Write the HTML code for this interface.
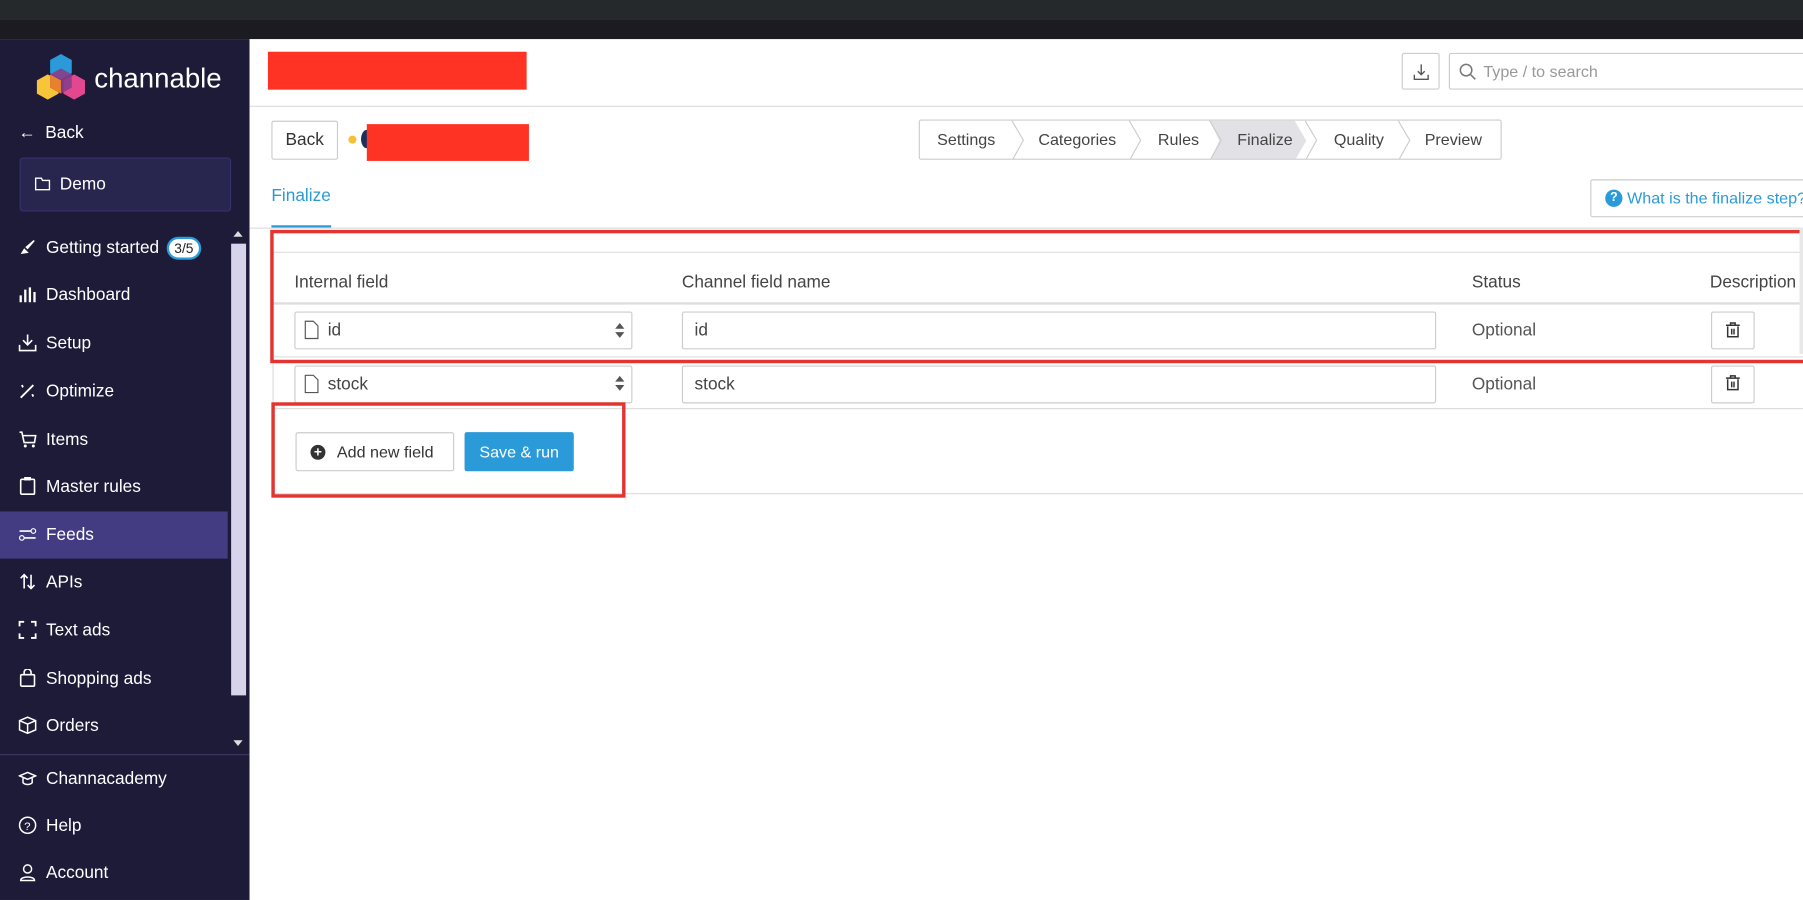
<!DOCTYPE html>
<html><head><meta charset="utf-8"><style>
*{box-sizing:border-box;margin:0;padding:0}
html,body{width:1803px;height:900px;overflow:hidden;background:#fff}
#w{position:absolute;left:0;top:0;width:1568px;height:783px;transform:scale(1.14987,1.1494);transform-origin:0 0;font-family:"Liberation Sans",sans-serif;color:#444}
.a{position:absolute}
.nav{position:absolute;left:0;width:198px;height:41px;color:#fff;font-size:15px;line-height:41px;padding-left:40px}
.nav svg{position:absolute;left:16px;top:12px}
.box{position:absolute;border:1px solid #ccc;border-radius:2px;background:#fff}
.hl{position:absolute;height:1px;background:#ddd}
.th{position:absolute;font-size:15px;color:#444;top:237px}
</style></head><body><div id="w">
<div class="a" style="left:0;top:0;width:1568px;height:17px;background:#25292c"></div>
<div class="a" style="left:0;top:17px;width:1568px;height:17px;background:#1c1b21"></div>
<!-- sidebar -->
<div class="a" style="left:0;top:34px;width:217px;height:749px;background:#1e1b39"></div>
<svg class="a" style="left:30px;top:46px" width="46" height="50" viewBox="0 0 44 46">
<polygon points="22,0 31,5 31,16 22,21 13,16 13,5" fill="#2a9ad8"/>
<polygon points="11,17 20,22 20,33 11,38 2,33 2,22" fill="#f7c53a"/>
<polygon points="33,17 42,22 42,33 33,38 24,33 24,22" fill="#e2478f"/>
<polygon points="22,12 31,17 31,28 22,33 13,28 13,17" fill="#8a3d8a" opacity=".9"/>
<polygon points="13,17 22,22 22,33 13,28" fill="#e8802d"/>
</svg>
<div class="a" style="left:82px;top:55px;color:#fff;font-size:24px">channable</div>
<div class="a" style="left:16px;top:107px;color:#fff;font-size:15px">&#8592;&nbsp; Back</div>
<div class="a" style="left:17px;top:137px;width:184px;height:47px;background:#28254f;border:1px solid #35316a;border-radius:3px;color:#fff;font-size:15px;line-height:45px;padding-left:34px">Demo
<svg class="a" style="left:12px;top:16px" width="14" height="12"><path d="M1 1h5l1 2h6v8H1z" fill="none" stroke="#fff" stroke-width="1.2"/></svg></div>
<div class="nav" style="top:195px">Getting started <span style="display:inline-block;background:#fff;color:#222;border:2px solid #2a9ad8;border-radius:10px;font-size:12px;line-height:16px;padding:0 5px;margin-left:2px">3/5</span><svg width="16" height="16"><path d="M2 14l3-5 4 4zM6 8l7-6c1 0 1 0 1 1l-6 7z" fill="#fff"/></svg></div>
<div class="nav" style="top:236px">Dashboard<svg width="16" height="16"><path d="M2 9v6M6 4v11M10 2v13M14 6v9" stroke="#fff" stroke-width="2"/></svg></div>
<div class="nav" style="top:278px">Setup<svg width="16" height="16"><path d="M8 1v9M4 6l4 4 4-4M1 10v5h14v-5" fill="none" stroke="#fff" stroke-width="1.4"/></svg></div>
<div class="nav" style="top:320px">Optimize<svg width="16" height="16"><path d="M2 14L13 3M3 3l1 2M12 11l1 2" stroke="#fff" stroke-width="1.6"/></svg></div>
<div class="nav" style="top:362px">Items<svg width="16" height="16"><path d="M1 2h2l2 9h9l1-6H4" fill="none" stroke="#fff" stroke-width="1.4"/><circle cx="6" cy="14" r="1.3" fill="#fff"/><circle cx="13" cy="14" r="1.3" fill="#fff"/></svg></div>
<div class="nav" style="top:403px">Master rules<svg width="16" height="16"><rect x="2" y="2" width="12" height="13" rx="1" fill="none" stroke="#fff" stroke-width="1.4"/><rect x="5" y="0" width="6" height="3" fill="#fff"/></svg></div>
<div class="nav" style="top:445px;background:#443c82">Feeds<svg width="16" height="16"><path d="M1 5h10M5 11h10" stroke="#fff" stroke-width="1.4"/><circle cx="13" cy="5" r="2" fill="none" stroke="#fff"/><circle cx="3" cy="11" r="2" fill="none" stroke="#fff"/></svg></div>
<div class="nav" style="top:486px">APIs<svg width="16" height="16"><path d="M5 2v12M2 5l3-3 3 3M11 2v12M8 11l3 3 3-3" fill="none" stroke="#fff" stroke-width="1.4"/></svg></div>
<div class="nav" style="top:528px">Text ads<svg width="16" height="16"><path d="M1 5V1h4M11 1h4v4M15 11v4h-4M5 15H1v-4" fill="none" stroke="#fff" stroke-width="1.6"/></svg></div>
<div class="nav" style="top:570px">Shopping ads<svg width="16" height="16"><rect x="2" y="5" width="12" height="10" rx="1" fill="none" stroke="#fff" stroke-width="1.4"/><path d="M5 5V3a3 3 0 016 0v2" fill="none" stroke="#fff" stroke-width="1.4"/></svg></div>
<div class="nav" style="top:611px">Orders<svg width="16" height="16"><path d="M8 1l7 3v8l-7 3-7-3V4zM1 4l7 3 7-3M8 7v8" fill="none" stroke="#fff" stroke-width="1.3"/></svg></div>
<div class="a" style="left:200px;top:198px;width:15px;height:460px;background:#1e1b39"></div>
<div class="a" style="left:201px;top:212px;width:13px;height:393px;background:#d6d3ea"></div>
<div class="a" style="left:203px;top:201px;width:0;height:0;border:4px solid transparent;border-bottom:5px solid #ddd;border-top:0"></div>
<div class="a" style="left:203px;top:644px;width:0;height:0;border:4px solid transparent;border-top:5px solid #ddd;border-bottom:0"></div>
<div class="a" style="left:0;top:656px;width:217px;height:1px;background:#3a3760"></div>
<div class="nav" style="top:657px">Channacademy<svg width="16" height="16"><path d="M1 6l7-3 7 3-7 3zM4 8v4c2 2 6 2 8 0V8" fill="none" stroke="#fff" stroke-width="1.3"/></svg></div>
<div class="nav" style="top:698px">Help<svg width="16" height="16"><circle cx="8" cy="8" r="7" fill="none" stroke="#fff" stroke-width="1.3"/><text x="5" y="12" fill="#fff" font-size="10" font-family="Liberation Sans">?</text></svg></div>
<div class="nav" style="top:739px">Account<svg width="16" height="16"><circle cx="8" cy="5" r="3.5" fill="none" stroke="#fff" stroke-width="1.3"/><path d="M2 15c0-4 12-4 12 0z" fill="none" stroke="#fff" stroke-width="1.3"/></svg></div>
<!-- main header -->
<div class="a" style="left:233px;top:45px;width:225px;height:33px;background:#ff3323"></div>
<div class="box" style="left:1219px;top:46px;width:33px;height:32px"><svg class="a" style="left:8px;top:8px" width="16" height="16"><path d="M8 1v9M5 7l3 3 3-3M2 10v4h12v-4" fill="none" stroke="#555" stroke-width="1.2"/></svg></div>
<div class="box" style="left:1260px;top:46px;width:320px;height:32px;font-size:14px;color:#999;line-height:30px;padding-left:29px">Type / to search<svg class="a" style="left:8px;top:8px" width="15" height="15"><circle cx="6" cy="6" r="5" fill="none" stroke="#777" stroke-width="1.3"/><path d="M10 10l4 4" stroke="#777" stroke-width="1.3"/></svg></div>
<div class="hl" style="left:217px;top:92px;width:1351px;background:#ddd"></div>
<div class="box" style="left:236px;top:105px;width:58px;height:34px;font-size:15px;line-height:32px;text-align:center;color:#333">Back</div>
<div class="a" style="left:303px;top:118px;width:7px;height:7px;border-radius:50%;background:#f5c033"></div>
<div class="a" style="left:314px;top:113px;width:10px;height:16px;border-radius:50%;background:#1a3060"></div>
<div class="a" style="left:319px;top:108px;width:141px;height:32px;background:#ff3323"></div>
<!-- stepper -->
<div class="box" style="left:799px;top:104px;width:507px;height:35px;overflow:hidden;font-size:14px;color:#444;line-height:33px">
<div class="a" style="left:252px;top:0;width:84px;height:35px;background:#e2e2e6;clip-path:polygon(0 0,88% 0,100% 50%,88% 100%,0 100%,10% 50%)"></div>
<span class="a" style="left:15px">Settings</span><span class="a" style="left:103px">Categories</span><span class="a" style="left:207px">Rules</span><span class="a" style="left:276px">Finalize</span><span class="a" style="left:360px">Quality</span><span class="a" style="left:439px">Preview</span>
<svg class="a" style="left:0;top:0" width="507" height="35"><path d="M80 0l10 17-10 18M182 0l10 17-10 18M252 0l10 17-10 18M335 0l10 17-10 18M416 0l10 17-10 18" fill="none" stroke="#ccc"/></svg>
</div>
<div class="a" style="left:236px;top:162px;font-size:15px;color:#2a9ad8">Finalize</div>
<div class="a" style="left:236px;top:196px;width:52px;height:2px;background:#2a9ad8"></div>
<div class="hl" style="left:217px;top:198px;width:1351px"></div>
<div class="box" style="left:1383px;top:156px;width:200px;height:33px;font-size:14px;color:#2a9ad8;line-height:31px;padding-left:31px">What is the finalize step?<span class="a" style="left:12px;top:8px;width:15px;height:15px;border-radius:50%;background:#2a9ad8;color:#fff;font-size:11px;line-height:15px;text-align:center;font-weight:bold">?</span></div>
<!-- table -->
<div class="a" style="left:237px;top:219px;width:1px;height:137px;background:#ddd"></div>
<div class="hl" style="left:237px;top:219px;width:1331px"></div>
<div class="th" style="left:256px">Internal field</div>
<div class="th" style="left:593px">Channel field name</div>
<div class="th" style="left:1280px">Status</div>
<div class="th" style="left:1487px">Description</div>
<div class="hl" style="left:237px;top:263px;width:1331px;height:2px"></div>
<div class="box" style="left:256px;top:271px;width:294px;height:33px;font-size:15px;line-height:31px;padding-left:28px">id</div>
<div class="box" style="left:593px;top:271px;width:656px;height:33px;font-size:15px;line-height:31px;padding-left:10px">id</div>
<div class="a" style="left:1280px;top:279px;font-size:15px;color:#555">Optional</div>
<div class="box" style="left:1488px;top:271px;width:38px;height:33px"></div>
<div class="hl" style="left:237px;top:310px;width:1331px"></div>
<div class="box" style="left:256px;top:318px;width:294px;height:33px;font-size:15px;line-height:31px;padding-left:28px">stock</div>
<div class="box" style="left:593px;top:318px;width:656px;height:33px;font-size:15px;line-height:31px;padding-left:10px">stock</div>
<div class="a" style="left:1280px;top:326px;font-size:15px;color:#555">Optional</div>
<div class="box" style="left:1488px;top:318px;width:38px;height:33px"></div>
<div class="hl" style="left:237px;top:355px;width:1331px"></div>
<svg class="a" style="left:0;top:0" width="1568" height="783">
<g fill="none" stroke="#555" stroke-width="1"><path d="M265.5 279.5h7l4 4v11h-11z"/><path d="M265.5 326.5h7l4 4v11h-11z"/></g>
<g fill="#555"><path d="M535 286l4-5 4 5zM535 289l4 5 4-5z"/><path d="M535 332l4-5 4 5zM535 335l4 5 4-5z"/></g>
<g fill="none" stroke="#333" stroke-width="1.3"><path d="M1501 283h12M1505 283v-2h4v2M1502.5 284v9h9v-9M1506 286v5M1508 286v5"/><path d="M1501 329h12M1505 329v-2h4v2M1502.5 330v9h9v-9M1506 332v5M1508 332v5"/></g>
</svg>
<!-- buttons -->
<div class="box" style="left:257px;top:376px;width:138px;height:34px;font-size:14px;line-height:32px;padding-left:35px;color:#333">Add new field<span class="a" style="left:12px;top:10px;width:13px;height:13px;border-radius:50%;background:#333;color:#fff;font-size:12px;line-height:13px;text-align:center;font-weight:bold">+</span></div>
<div class="a" style="left:404px;top:376px;width:95px;height:34px;background:#2a9ad8;border-radius:2px;color:#fff;font-size:14px;line-height:34px;text-align:center">Save &amp; run</div>
<div class="hl" style="left:237px;top:429px;width:1331px"></div>
<!-- red annotation boxes -->
<div class="a" style="left:235px;top:200px;width:1340px;height:116px;border:3px solid #e3342f"></div>
<div class="a" style="left:236px;top:350px;width:308px;height:83px;border:3px solid #e3342f"></div>
<div class="a" style="left:1565px;top:198px;width:3px;height:110px;background:#e8e8e8"></div>
</div></body></html>
